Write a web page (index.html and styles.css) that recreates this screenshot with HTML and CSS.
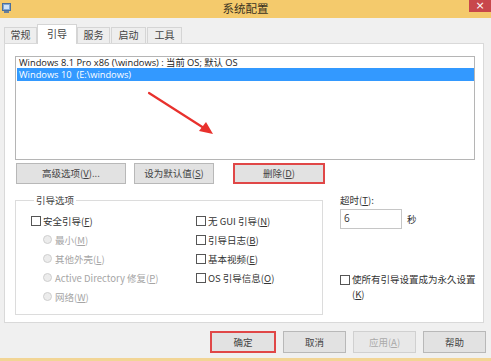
FILE: index.html
```html
<!DOCTYPE html>
<html lang="zh">
<head>
<meta charset="utf-8">
<title>系统配置</title>
<link rel="stylesheet" href="styles.css">
</head>
<body>
<div class="window">
  <div class="titlebar">
    <svg class="appicon" width="9" height="10" viewBox="0 0 9 10"><rect x="0.5" y="0.5" width="8" height="7" fill="#7fa7d6" stroke="#4a6f9c"/><rect x="2" y="2" width="5" height="4" fill="#cfe2f6"/><rect x="2" y="8" width="5" height="2" fill="#6a7f99"/></svg>
    <span class="title">系统配置</span>
    <span class="close">×</span>
  </div>
  <div class="tabs">
    <span class="tab">常规</span>
    <span class="tab active">引导</span>
    <span class="tab">服务</span>
    <span class="tab">启动</span>
    <span class="tab">工具</span>
  </div>
  <div class="panel">
    <div class="list">
      <div class="item">Windows 8.1 Pro x86 (\windows) : 当前 OS; 默认 OS</div>
      <div class="item sel">Windows 10&nbsp; (E:\windows)</div>
      <svg class="arrow" width="80" height="55" viewBox="0 0 80 55"><line x1="2" y1="2" x2="60" y2="39" stroke="#e8312d" stroke-width="2.2" stroke-linecap="round"/><polygon points="66,43 52,40 59,31" fill="#e8312d"/></svg>
    </div>
    <div class="btnrow">
      <button class="btn b-adv">高级选项(<u>V</u>)...</button>
      <button class="btn b-def">设为默认值(<u>S</u>)</button>
      <button class="btn b-del hl">删除(<u>D</u>)</button>
    </div>
    <div class="lower">
      <fieldset class="group">
        <legend>引导选项</legend>
        <div class="opts">
          <div class="col">
            <label class="opt"><span class="cb"></span>安全引导(<u>F</u>)</label>
            <label class="opt sub dis"><span class="rb"></span>最小(<u>M</u>)</label>
            <label class="opt sub dis"><span class="rb"></span>其他外壳(<u>L</u>)</label>
            <label class="opt sub dis"><span class="rb"></span>Active Directory 修复(<u>P</u>)</label>
            <label class="opt sub dis"><span class="rb"></span>网络(<u>W</u>)</label>
          </div>
          <div class="col">
            <label class="opt"><span class="cb"></span>无 GUI 引导(<u>N</u>)</label>
            <label class="opt"><span class="cb"></span>引导日志(<u>B</u>)</label>
            <label class="opt"><span class="cb"></span>基本视频(<u>E</u>)</label>
            <label class="opt"><span class="cb"></span>OS 引导信息(<u>O</u>)</label>
          </div>
        </div>
      </fieldset>
      <div class="side">
        <div class="tlabel">超时(<u>T</u>):</div>
        <div class="trow"><span class="input">6</span><span class="sec">秒</span></div>
        <label class="perm"><span class="cb"></span><span>使所有引导设置成为永久设置<br>(<u>K</u>)</span></label>
      </div>
    </div>
  </div>
  <div class="footer">
    <button class="btn fb hl">确定</button>
    <button class="btn fb">取消</button>
    <button class="btn fb disabled">应用(<u>A</u>)</button>
    <button class="btn fb">帮助</button>
  </div>
</div>
</body>
</html>
```
FILE: styles.css
```css
* { box-sizing: border-box; }
html, body { margin: 0; padding: 0; }
body {
  width: 491px;
  height: 361px;
  overflow: hidden;
  background: #f0f0f0;
  font-family: "Open Sans", "Noto Sans CJK SC", sans-serif;
  font-size: 10px;
  color: #333;
}
u { text-decoration: underline; text-underline-offset: 1px; }
.window {
  height: 361px;
  display: flex;
  flex-direction: column;
  border-bottom: 3px solid #f2d595;
}
.titlebar {
  height: 18px;
  background: #f4ca6c;
  display: flex;
  align-items: center;
  position: relative;
  flex: none;
}
.appicon { margin-left: 2px; margin-top: -3px; }
.title {
  position: absolute;
  left: 0; right: 0;
  text-align: center;
  font-family: "Noto Sans CJK SC", sans-serif;
  font-size: 11.5px;
  color: #3b3322;
  top: 0;
  line-height: 17px;
}
.close {
  position: absolute;
  right: 0; top: 0;
  width: 22px; height: 12px;
  background: #c8474b;
  color: #fff;
  font-size: 11px;
  line-height: 11px;
  text-align: center;
  font-family: "DejaVu Sans", sans-serif;
}
.tabs {
  display: flex;
  align-items: flex-end;
  margin-top: 6px;
  padding-left: 4px;
  height: 19px;
  flex: none;
  position: relative;
  z-index: 1;
}
.tab {
  height: 16px;
  border: 1px solid #d5d5d5;
  border-bottom: none;
  background: #eeeeee;
  font-family: "Noto Sans CJK SC", sans-serif;
  font-size: 10px;
  line-height: 14px;
  color: #444;
  text-align: center;
  margin-right: 1px;
}
.tab:nth-child(1) { width: 33px; }
.tab:nth-child(2) { width: 40px; }
.tab:nth-child(3) { width: 33px; margin-left: -1px; }
.tab:nth-child(4) { width: 35px; }
.tab:nth-child(5) { width: 35px; }
.tab.active {
  height: 20px;
  background: #fff;
  margin-bottom: -1px;
  line-height: 18px;
  margin-left: -1px;
}
.panel {
  margin-left: 4px;
  width: 480px;
  height: 280px;
  background: #fff;
  border: 1px solid #d9d9d9;
  padding: 12px 0 0 10px;
  flex: none;
}
.list {
  position: relative;
  width: 460px;
  height: 104px;
  border: 1px solid #b5b5b5;
  padding: 0 0 0 1px;
  font-size: 9.3px;
}
.item {
  height: 11px;
  line-height: 11px;
  padding-left: 2px;
  color: #222;
  white-space: nowrap;
}
.item.sel {
  background: #3399ff;
  color: #fff;
  width: 457px;
  height: 13px;
  line-height: 13px;
}
.arrow {
  position: absolute;
  left: 131px;
  top: 34px;
}
.btnrow {
  display: flex;
  margin-top: 3px;
  padding-left: 1px;
  height: 21px;
}
.btn {
  height: 21px;
  background: #e2e2e2;
  border: 1px solid #b8b8b8;
  font-family: "Noto Sans CJK SC", sans-serif;
  font-size: 9.5px;
  color: #444;
  padding: 0;
  line-height: 17px;
}
.btn.hl { border: 2px solid #e04747; }
.b-adv { width: 110px; }
.b-def { width: 80px; margin-left: 8px; }
.b-del { width: 92px; margin-left: 19px; }
.lower {
  display: flex;
  margin-top: 9px;
}
.group {
  margin: 0;
  width: 308px;
  height: 122px;
  border: 1px solid #dcdcdc;
  padding: 4px 0 0 15px;
  font-family: "Noto Sans CJK SC", sans-serif;
}
.group legend {
  padding: 0 2px;
  margin-left: 3px;
  font-size: 9.5px;
  color: #444;
  line-height: 14px;
}
.opts {
  display: flex;
}
.col {
  display: flex;
  flex-direction: column;
}
.col:first-child { width: 165px; }
.opt {
  height: 19px;
  display: flex;
  align-items: center;
  font-size: 9.5px;
  color: #333;
  white-space: nowrap;
}
.opt.sub { padding-left: 12px; }
.opt.dis { color: #a5a5a5; }
.cb {
  width: 10px; height: 10px;
  border: 1px solid #555;
  background: #fff;
  margin-right: 2px;
  flex: none;
}
.rb {
  width: 9px; height: 9px;
  border-radius: 50%;
  border: 1px solid #cfcfcf;
  background: #ececec;
  margin-right: 3px;
  flex: none;
}
.side {
  margin-left: 17px;
  margin-top: 0;
  font-family: "Noto Sans CJK SC", sans-serif;
  font-size: 9.5px;
  color: #333;
  display: flex;
  flex-direction: column;
}
.tlabel { line-height: 14px; }
.trow {
  display: flex;
  align-items: center;
  margin-top: 2px;
}
.input {
  width: 62px;
  height: 20px;
  border: 1px solid #c6c6c6;
  padding-left: 3px;
  line-height: 17px;
  font-family: "Open Sans", sans-serif;
  font-size: 10px;
}
.sec { margin-left: 5px; }
.perm {
  display: flex;
  align-items: flex-start;
  margin-top: 43px;
  line-height: 15px;
}
.perm .cb { margin-top: 3px; }
.footer {
  display: flex;
  justify-content: flex-end;
  gap: 7px;
  padding-right: 5px;
  margin-top: 8px;
}
.fb { width: 63px; height: 22px; }
.fb.hl { width: 66px; }
.btn.disabled { color: #aaa; background: #e8e8e8; border-color: #d0d0d0; }
```
